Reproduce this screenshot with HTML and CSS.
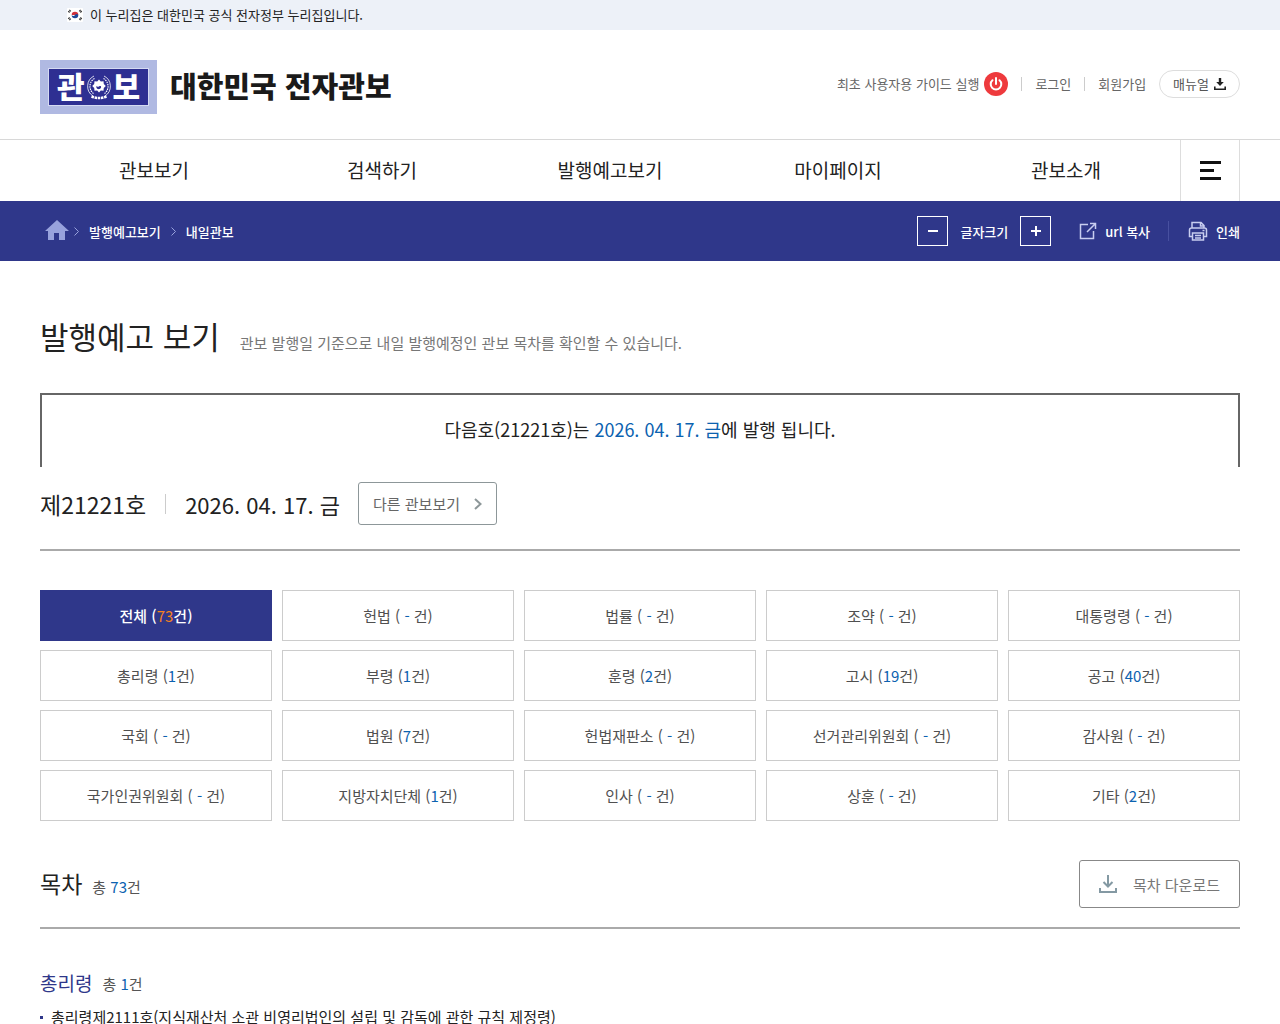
FILE: index.html
```html
<!DOCTYPE html>
<html lang="ko">

<head>
    <meta charset="utf-8">
    <title>대한민국 전자관보</title>
    <link rel="stylesheet" href="styles.css">
</head>

<body>
    <div class="gov">
        <div class="inner">
            <svg class="flag" width="16" height="14" viewBox="0 0 16 14">
                <rect width="16" height="14" rx="1" fill="#fff"/>
                <path d="M4.7 7a3.3 3.3 0 0 1 6.6 0z" fill="#d0313c"/>
                <path d="M4.7 7a3.3 3.3 0 0 0 6.6 0c-1-1.6-2.6-1.2-3.3 0s-2.3 1.500-3.300 0z" fill="#1d4a9a"/>
                <path d="M1.500 4.200l2-2M12.500 2.200l2 2M1.500 9.800l2 2M12.500 11.800l2-2" stroke="#333" stroke-width="2" stroke-dasharray="1.200 .4"/>
            </svg>
            <span>이 누리집은 대한민국 공식 전자정부 누리집입니다.</span>
        </div>
    </div>

    <header class="header">
        <div class="inner">
            <a class="logo" href="#">
                <span class="logo-mark">
                    <span class="logo-plate">
                        관
                        <svg width="26" height="26" viewBox="0 0 26 26" fill="none" stroke="#fff">
                            <path d="M8 2a11.500 11.500 0 0 0-1 20M18 2a11.500 11.500 0 0 1 1 20" stroke-width=".8"/>
                            <path d="M8.500 4.500a9 9 0 0 0-1 15M17.500 4.500a9 9 0 0 1 1 15" stroke-width="1.200" stroke-dasharray="1.500 .8"/>
                            <path d="M13 5.500l1.800 2 2.700-.3.300 2.700 2 2.100-2 2.100-.3 2.700-2.700-.3-1.800 2-1.800-2-2.700.3-.3-2.700-2-2.100 2-2.100.3-2.700 2.700.3z" fill="#fff" stroke="none"/>
                            <path d="M10.500 12c1.200 1.800 2.500 0 3.700 0s1.500 2.300-.9 3-3.400-1.300-2.800-3z" fill="#2e2f92" stroke="none"/>
                            <path d="M5.500 22.500q7.500 3 15 0" stroke-width="2.500" stroke-dasharray="2.500 .7"/>
                        </svg>
                        보
                    </span>
                </span>
                <span class="logo-text">대한민국 전자관보</span>
            </a>
            <ul class="util">
                <li>
                    <a class="guide" href="#">최초 사용자용 가이드 실행
                        <svg width="24" height="24" viewBox="0 0 24 24" fill="none" stroke="#fff" stroke-width="2" stroke-linecap="round">
                            <circle cx="12" cy="12" r="12" fill="#ee3a3d" stroke="none"/>
                            <path d="M12 6v6M8.500 8.200a5.300 5.300 0 1 0 7 0"/>
                        </svg>
                    </a>
                </li>
                <li><a href="#">로그인</a></li>
                <li><a href="#">회원가입</a></li>
                <li class="manual">
                    <a href="#">매뉴얼
                        <svg width="12" height="12" viewBox="0 0 12 12" fill="#222">
                            <path d="M4.800 0h2.400v4h2.600L6 8 2.200 4h2.600zM0 8.500h1.600v1.900h8.800V8.500H12V12H0z"/>
                        </svg>
                    </a>
                </li>
            </ul>
        </div>
    </header>

    <nav class="gnb">
        <div class="inner">
            <a href="#">관보보기</a>
            <a href="#">검색하기</a>
            <a href="#">발행예고보기</a>
            <a href="#">마이페이지</a>
            <a href="#">관보소개</a>
            <button class="all-menu" type="button" aria-label="전체메뉴">
                <svg width="21" height="19" viewBox="0 0 21 19" fill="#111">
                    <path d="M0 0h21v3H0zM0 8h14v3H0zM0 16h21v3H0z"/>
                </svg>
            </button>
        </div>
    </nav>

    <div class="location">
        <div class="inner">
            <div class="path">
                <a class="home" href="#" aria-label="홈">
                    <svg width="24" height="22" viewBox="0 0 24 22" fill="#98a2dc">
                        <path d="M12 0L0 11h3v9h6v-7h5v7h6v-9h4z"/>
                    </svg>
                </a>
                <svg class="arrow" width="5" height="9" viewBox="0 0 5 9"><path d="M.5.5l4 4-4 4"/></svg>
                <a href="#">발행예고보기</a>
                <svg class="arrow" width="5" height="9" viewBox="0 0 5 9"><path d="M.5.5l4 4-4 4"/></svg>
                <a href="#">내일관보</a>
            </div>
            <div class="tools">
                <button class="zoom" type="button" aria-label="글자 작게">
                    <svg width="12" height="12" viewBox="0 0 12 12"><path d="M1 6h10"/></svg>
                </button>
                <span class="zoom-label">글자크기</span>
                <button class="zoom" type="button" aria-label="글자 크게">
                    <svg width="12" height="12" viewBox="0 0 12 12"><path d="M1 6h10M6 1v10"/></svg>
                </button>
                <button class="tool" type="button">
                    <svg width="18" height="18" viewBox="0 0 18 18" fill="none" stroke="#c8cdf0" stroke-width="1.500">
                        <path d="M9 2.500H1.500v14h13V9M11 1.500h5.500V7M16.500 1.500L8 10"/>
                    </svg>
                    url 복사
                </button>
                <button class="tool print" type="button">
                    <svg width="20" height="20" viewBox="0 0 20 20" fill="none" stroke="#c8cdf0" stroke-width="1.500">
                        <path d="M4 6.500V1.500h9l3 3v2M12.500 1.500V5H16M4 15.500H1.500V9q0-2 2-2h13q2 0 2 2v6.500H16M4.500 12h11v7h-11zM7 14.500h6M7 17h6M14.500 9.500h2"/>
                    </svg>
                    인쇄
                </button>
            </div>
        </div>
    </div>

    <main class="inner content">
        <div class="title">
            <h1>발행예고 보기</h1>
            <p>관보 발행일 기준으로 내일 발행예정인 관보 목차를 확인할 수 있습니다.</p>
        </div>

        <p class="notice">다음호(21221호)는 <em>2026. 04. 17. 금</em>에 발행 됩니다.</p>

        <div class="issue">
            <span class="no">제21221호</span>
            <span class="date">2026. 04. 17. 금</span>
            <a class="other" href="#">다른 관보보기
                <svg width="8" height="12" viewBox="0 0 8 12" fill="none" stroke="#8d9799" stroke-width="2"><path d="M1 1l5.500 5L1 11"/></svg>
            </a>
        </div>

        <ul class="tabs">
            <li><a class="on" href="#">전체 (<em>73</em>건)</a></li>
            <li><a href="#">헌법 (<em> - </em>건)</a></li>
            <li><a href="#">법률 (<em> - </em>건)</a></li>
            <li><a href="#">조약 (<em> - </em>건)</a></li>
            <li><a href="#">대통령령 (<em> - </em>건)</a></li>
            <li><a href="#">총리령 (<em>1</em>건)</a></li>
            <li><a href="#">부령 (<em>1</em>건)</a></li>
            <li><a href="#">훈령 (<em>2</em>건)</a></li>
            <li><a href="#">고시 (<em>19</em>건)</a></li>
            <li><a href="#">공고 (<em>40</em>건)</a></li>
            <li><a href="#">국회 (<em> - </em>건)</a></li>
            <li><a href="#">법원 (<em>7</em>건)</a></li>
            <li><a href="#">헌법재판소 (<em> - </em>건)</a></li>
            <li><a href="#">선거관리위원회 (<em> - </em>건)</a></li>
            <li><a href="#">감사원 (<em> - </em>건)</a></li>
            <li><a href="#">국가인권위원회 (<em> - </em>건)</a></li>
            <li><a href="#">지방자치단체 (<em>1</em>건)</a></li>
            <li><a href="#">인사 (<em> - </em>건)</a></li>
            <li><a href="#">상훈 (<em> - </em>건)</a></li>
            <li><a href="#">기타 (<em>2</em>건)</a></li>
        </ul>

        <div class="toc-head">
            <h2>목차</h2>
            <span class="count">총 <em>73</em>건</span>
            <button class="download" type="button">
                <svg width="18" height="18" viewBox="0 0 18 18" fill="none" stroke="#8499a3" stroke-width="2">
                    <path d="M9 0v11M4.500 7L9 11.500 13.500 7M1 13v4h16v-4"/>
                </svg>
                목차 다운로드
            </button>
        </div>

        <section class="toc">
            <div class="toc-title">
                <h3>총리령</h3>
                <span class="count">총 <em>1</em>건</span>
            </div>
            <ul>
                <li><a href="#">총리령제2111호(지식재산처 소관 비영리법인의 설립 및 감독에 관한 규칙 제정령)</a></li>
            </ul>
        </section>
    </main>
</body>

</html>
```

FILE: styles.css
```css
* {
    box-sizing: border-box;
}
body {
    margin: 0;
    font-family: "Noto Sans CJK KR", "Noto Sans", sans-serif;
    font-size: 15px;
    color: #222;
    background: #fff;
}
h1, h2, h3, p, ul {
    margin: 0;
    padding: 0;
    font-weight: 400;
}
ul {
    list-style: none;
}
a {
    color: inherit;
    text-decoration: none;
}
em {
    font-style: normal;
    color: #0c62b0;
}
button {
    padding: 0;
    border: 0;
    background: none;
    font: inherit;
    color: inherit;
    cursor: pointer;
}
svg {
    flex: none;
}

.inner {
    display: flex;
    align-items: center;
    max-width: 1280px;
    margin: 0 auto;
    padding: 0 40px;
}

/* top bar */
.gov {
    background: #edf1f8;
    font-size: 13px;
    line-height: 30px;
}
.gov .inner {
    gap: 7px;
    padding-left: 67px;
}

/* header */
.header .inner {
    height: 109px;
}
.logo {
    display: flex;
    align-items: center;
    gap: 13px;
    margin-right: auto;
    padding-top: 4px;
}
.logo-mark {
    padding: 8px;
    background: #b0b9e2;
}
.logo-plate {
    display: flex;
    align-items: center;
    justify-content: center;
    gap: 1px;
    width: 101px;
    height: 38px;
    padding-bottom: 4px;
    border: 1px solid #d5daf2;
    background: #2e2f92;
    color: #fff;
    font-size: 30px;
    font-weight: 900;
    line-height: 32px;
}
.logo-plate svg {
    margin-top: 4px;
}
.logo-text {
    padding-bottom: 4px;
    font-size: 29px;
    font-weight: 900;
    line-height: 40px;
    color: #1a1a1a;
}
.util {
    display: flex;
    align-items: center;
    padding-bottom: 2px;
    font-size: 13px;
    color: #666;
}
.util li, .util a {
    display: flex;
    align-items: center;
    gap: 5px;
}
.util li + li::before {
    content: "";
    width: 1px;
    height: 14px;
    margin: 0 8px 0 13px;
    background: #ccc;
}
.util .manual::before {
    display: none;
}
.manual a {
    height: 28px;
    margin-left: 13px;
    padding: 0 13px;
    border: 1px solid #ddd;
    border-radius: 14px;
    color: #555;
}

/* main menu */
.gnb {
    border-top: 1px solid #d8d8d8;
}
.gnb .inner {
    align-items: flex-start;
}
.gnb a {
    flex: 1;
    font-size: 19px;
    line-height: 59px;
    text-align: center;
}
.all-menu {
    display: flex;
    align-items: center;
    justify-content: center;
    width: 60px;
    height: 61px;
    border: solid #ddd;
    border-width: 0 1px;
}

/* location bar */
.location {
    background: #2f378a;
    color: #fff;
    font-size: 13px;
    font-weight: 500;
}
.location .inner {
    justify-content: space-between;
    height: 60px;
}
.path, .tools {
    display: flex;
    align-items: center;
}
.path {
    gap: 10px;
    padding-left: 5px;
}
.home {
    display: flex;
    margin-right: -5px;
}
.arrow {
    fill: none;
    stroke: #98a2dc;
}
.zoom {
    display: flex;
    align-items: center;
    justify-content: center;
    width: 31px;
    height: 30px;
    border: 1px solid #fff;
}
.zoom path {
    stroke: #fff;
    stroke-width: 2;
}
.zoom-label {
    margin: 0 12px;
}
.tool {
    display: flex;
    align-items: center;
    gap: 8px;
    margin-left: 28px;
}
.print {
    margin-left: 18px;
}
.print::before {
    content: "";
    width: 1px;
    height: 20px;
    margin-right: 11px;
    background: #4850a0;
}

/* content */
.content {
    display: block;
    padding-bottom: 80px;
}
.title {
    display: flex;
    align-items: baseline;
    gap: 20px;
    padding: 50px 0 33px;
}
.title h1 {
    font-size: 31px;
    line-height: 49px;
}
.title p {
    color: #777;
}
.notice {
    height: 74px;
    border: solid #666;
    border-width: 2px 2px 0;
    font-size: 18px;
    line-height: 68px;
    text-align: center;
}
.issue {
    display: flex;
    align-items: center;
    padding: 15px 0 24px;
    border-bottom: 2px solid #aaa;
    font-size: 23px;
}
.date {
    display: flex;
    align-items: center;
    font-size: 22px;
}
.date::before {
    content: "";
    width: 1px;
    height: 20px;
    margin: 0 19px;
    background: #ccc;
}
.other {
    display: flex;
    align-items: center;
    gap: 14px;
    height: 43px;
    margin-left: 18px;
    padding: 0 14px;
    border: 1px solid #8d9799;
    border-radius: 3px;
    font-size: 15px;
    color: #666;
}

.tabs {
    display: grid;
    grid-template-columns: repeat(5, 1fr);
    gap: 9px 10px;
    margin-top: 39px;
}
.tabs a {
    display: block;
    border: 1px solid #ccc;
    line-height: 49px;
    text-align: center;
    color: #505050;
}
.tabs .on {
    border-color: #2f378a;
    background: #2f378a;
    color: #fff;
    font-weight: 500;
}
.tabs .on em {
    color: #f5821f;
    font-weight: 400;
}

.toc-head {
    display: flex;
    align-items: center;
    gap: 10px;
    padding: 39px 0 19px;
    border-bottom: 2px solid #aaa;
}
.toc-head h2 {
    padding-bottom: 2px;
    font-size: 23px;
}
.count {
    padding-top: 5px;
    color: #555;
}
.download {
    display: flex;
    align-items: center;
    gap: 16px;
    height: 48px;
    margin-left: auto;
    padding: 0 19px;
    border: 1px solid #888;
    border-radius: 3px;
    color: #777;
}
.toc {
    padding-top: 38px;
}
.toc-title {
    display: flex;
    align-items: center;
    gap: 10px;
    line-height: 30px;
}
.toc-title .count {
    padding-top: 2px;
}
.toc h3 {
    font-size: 19px;
    color: #2f378a;
}
.toc li {
    display: flex;
    align-items: center;
    gap: 8px;
    margin-top: 5px;
    line-height: 26px;
}
.toc li::before {
    content: "";
    width: 3px;
    height: 3px;
    background: #2f378a;
}
```
